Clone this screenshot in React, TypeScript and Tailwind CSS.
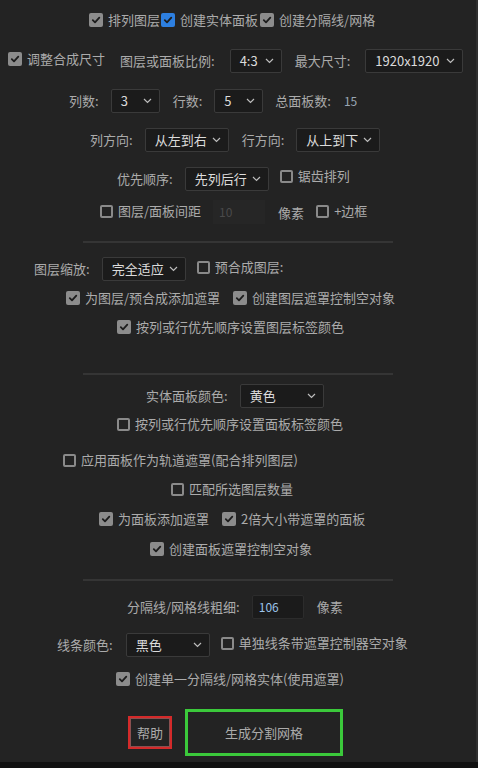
import type { ReactNode } from "react";

const font = {
  fontFamily: '"Noto Sans CJK SC", "Liberation Sans", sans-serif',
};

function Check({ checked, blue }: { checked?: boolean; blue?: boolean }) {
  if (!checked) {
    return (
      <span className="box-border inline-block h-[13px] w-[13px] shrink-0 rounded-[2px] border-2 border-[#8a8a8a]" />
    );
  }
  return (
    <span
      className={
        blue
          ? "flex h-[14px] w-[14px] shrink-0 items-center justify-center rounded-[2px] bg-[#2d7fe0]"
          : "flex h-[14px] w-[14px] shrink-0 items-center justify-center rounded-[2px] bg-[#8c8c8c]"
      }
    >
      <svg width="10" height="10" viewBox="0 0 10 10">
        <path
          d="M1.8 5.2 L4 7.4 L8.3 2.6"
          fill="none"
          stroke="#1c1c1c"
          strokeWidth="1.8"
          strokeLinecap="round"
          strokeLinejoin="round"
        />
      </svg>
    </span>
  );
}

function Box({
  checked,
  blue,
  children,
  className = "",
}: {
  checked?: boolean;
  blue?: boolean;
  children: ReactNode;
  className?: string;
}) {
  return (
    <span className={"flex items-center gap-[5px] " + className}>
      <Check checked={checked} blue={blue} />
      <span className="whitespace-nowrap">{children}</span>
    </span>
  );
}

function Select({ value, w }: { value: string; w: string }) {
  return (
    <span
      className={
        "flex h-[24px] items-center justify-between rounded-[2px] border border-[#3a3a3a] bg-[#1b1b1b] pl-[9px] pr-[7px] text-[#dcdcdc] " +
        w
      }
    >
      <span className="whitespace-nowrap">{value}</span>
      <svg width="9" height="6" viewBox="0 0 9 6">
        <path d="M1 1 L4.5 4.5 L8 1" fill="none" stroke="#bdbdbd" strokeWidth="1.2" />
      </svg>
    </span>
  );
}

function Sep({ className }: { className: string }) {
  return <div className={"mx-[83px] h-[2px] bg-[#353535] " + className} />;
}

export default function App() {
  return (
    <div
      className="flex h-[768px] w-[478px] flex-col overflow-hidden bg-[#232323] text-[13px] text-[#ababab]"
      style={font}
    >
      <div className="flex flex-1 flex-col border-r-2 border-[#2f2f2f]">
        <div className="mt-[8px] flex h-[24px] items-center pl-[89px]">
          <Box checked>排列图层</Box>
          <Box checked blue className="ml-[1px]">创建实体面板</Box>
          <Box checked className="ml-[2px]">创建分隔线/网格</Box>
        </div>

        <div className="mt-[17px] flex h-[24px] items-center pl-[8px]">
          <Box checked className="-mt-[5px]">调整合成尺寸</Box>
          <span className="ml-[15px] whitespace-nowrap">图层或面板比例:</span>
          <span className="ml-[15px]">
            <Select value="4:3" w="w-[52px]" />
          </span>
          <span className="ml-[13px]">最大尺寸:</span>
          <span className="ml-[15px]">
            <Select value="1920x1920" w="w-[98px]" />
          </span>
        </div>

        <div className="mt-[16px] flex h-[24px] items-center pl-[69px]">
          <span>列数:</span>
          <span className="ml-[12px]">
            <Select value="3" w="w-[49px]" />
          </span>
          <span className="ml-[13px]">行数:</span>
          <span className="ml-[12px]">
            <Select value="5" w="w-[49px]" />
          </span>
          <span className="ml-[12px]">总面板数:</span>
          <span className="ml-[13px] text-[12px] text-[#9aa6b4]">15</span>
        </div>

        <div className="mt-[15px] flex h-[24px] items-center pl-[90px]">
          <span>列方向:</span>
          <span className="ml-[12px]">
            <Select value="从左到右" w="w-[84px]" />
          </span>
          <span className="ml-[13px]">行方向:</span>
          <span className="ml-[12px]">
            <Select value="从上到下" w="w-[84px]" />
          </span>
        </div>

        <div className="mt-[15px] flex h-[24px] items-center pl-[117px]">
          <span>优先顺序:</span>
          <span className="ml-[12px]">
            <Select value="先列后行" w="w-[84px]" />
          </span>
          <Box className="ml-[11px] -mt-[6px]">锯齿排列</Box>
        </div>

        <div className="mt-[9px] flex h-[24px] items-center pl-[100px]">
          <Box className="-mt-[2px]">图层/面板间距</Box>
          <span className="ml-[12px] flex h-[24px] w-[52px] items-center bg-[#262626] pl-[6px] text-[12px] text-[#4a4a4a]">
            10
          </span>
          <span className="ml-[13px] mt-[2px]">像素</span>
          <Box className="ml-[12px] -mt-[2px]">+边框</Box>
        </div>

        <Sep className="mt-[17px]" />

        <div className="mt-[14px] flex h-[24px] items-center pl-[34px]">
          <span>图层缩放:</span>
          <span className="ml-[12px]">
            <Select value="完全适应" w="w-[84px]" />
          </span>
          <Box className="ml-[11px] -mt-[4px]">预合成图层:</Box>
        </div>

        <div className="mt-[5px] flex h-[24px] items-center pl-[66px]">
          <Box checked>为图层/预合成添加遮罩</Box>
          <Box checked className="ml-[13px]">创建图层遮罩控制空对象</Box>
        </div>

        <div className="mt-[5px] flex h-[24px] items-center pl-[117px]">
          <Box checked>按列或行优先顺序设置图层标签颜色</Box>
        </div>

        <Sep className="mt-[34px]" />

        <div className="mt-[9px] flex h-[24px] items-center pl-[146px]">
          <span>实体面板颜色:</span>
          <span className="ml-[12px]">
            <Select value="黄色" w="w-[84px]" />
          </span>
        </div>

        <div className="mt-[4px] flex h-[24px] items-center pl-[117px]">
          <Box>按列或行优先顺序设置面板标签颜色</Box>
        </div>

        <div className="mt-[12px] flex h-[24px] items-center pl-[63px]">
          <Box>应用面板作为轨道遮罩(配合排列图层)</Box>
        </div>

        <div className="mt-[5px] flex h-[24px] items-center pl-[171px]">
          <Box>匹配所选图层数量</Box>
        </div>

        <div className="mt-[6px] flex h-[24px] items-center pl-[99px]">
          <Box checked>为面板添加遮罩</Box>
          <Box checked className="ml-[13px]">2倍大小带遮罩的面板</Box>
        </div>

        <div className="mt-[6px] flex h-[24px] items-center pl-[150px]">
          <Box checked>创建面板遮罩控制空对象</Box>
        </div>

        <Sep className="mt-[18px]" />

        <div className="mt-[14px] flex h-[24px] items-center pl-[127px]">
          <span>分隔线/网格线粗细:</span>
          <span className="ml-[12px] flex h-[24px] w-[52px] items-center rounded-[2px] border border-[#2c2c2c] bg-[#1b1b1b] pl-[6px] text-[12px] text-[#9cc3ea]">
            106
          </span>
          <span className="ml-[13px]">像素</span>
        </div>

        <div className="mt-[14px] flex h-[24px] items-center pl-[57px]">
          <span>线条颜色:</span>
          <span className="ml-[13px]">
            <Select value="黑色" w="w-[84px]" />
          </span>
          <Box className="ml-[11px] -mt-[4px]">单独线条带遮罩控制器空对象</Box>
        </div>

        <div className="mt-[10px] flex h-[24px] items-center pl-[116px]">
          <Box checked>创建单一分隔线/网格实体(使用遮罩)</Box>
        </div>

        <div className="mt-[18px] flex items-center pl-[128px]">
          <span className="flex h-[33px] w-[44px] items-center justify-center border-2 border-[#d42a2a] shadow-[inset_0_0_0_1px_#8a5050]">
            帮助
          </span>
          <span className="ml-[13px] flex h-[47px] w-[158px] items-center justify-center border-[3px] border-[#3bc93b]">
            生成分割网格
          </span>
        </div>
      </div>
      <div className="h-[6px] bg-[#111111]" />
    </div>
  );
}
